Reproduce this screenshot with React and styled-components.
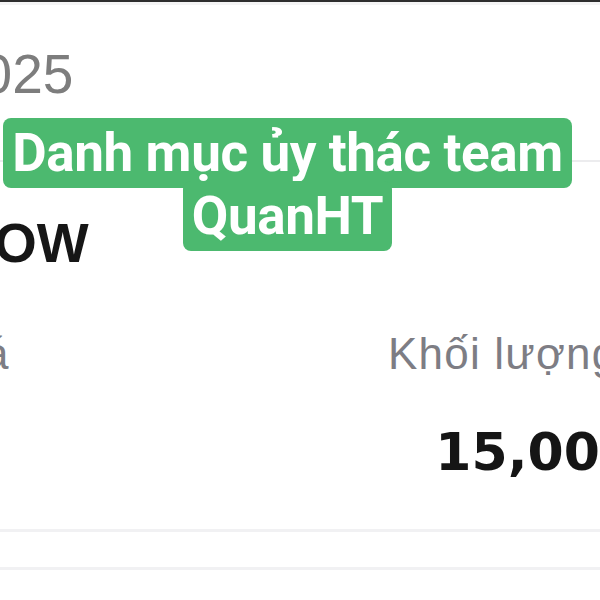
import styled, { createGlobalStyle } from "styled-components";

const Global = createGlobalStyle`
  html, body {
    margin: 0;
    padding: 0;
    background: #ffffff;
  }
  body {
    width: 600px;
    height: 600px;
    overflow: hidden;
  }
`;

const Screen = styled.div`
  position: relative;
  width: 600px;
  height: 600px;
  overflow: hidden;
  background: #ffffff;
  border-top: 2px solid #2e2e2e;
  box-sizing: border-box;
  font-family: "Liberation Sans", Arial, sans-serif;
`;

const Sheet = styled.div`
  width: 697px;
  margin-left: -57px;
  border-top: 3px solid #f4f4f5;
  display: flex;
  flex-direction: column;
`;

const Block = styled.div`
  padding-left: ${(p) => p.shift || 0}px;
`;

const DateText = styled.div`
  margin-top: 39px;
  font-size: 55px;
  line-height: 60px;
  color: #7d7d7d;
`;

const Divider = styled.div`
  height: 2px;
  background: #ececee;
  margin-top: ${(p) => p.top || 0}px;
`;

const Ticker = styled.div`
  margin-top: 49px;
  font-size: 55px;
  line-height: 64px;
  font-weight: 700;
  color: #161616;
`;

const Row = styled.div`
  display: grid;
  grid-template-columns: 1fr 252px;
  align-items: baseline;
  margin-top: ${(p) => p.top || 0}px;
`;

const Label = styled.span`
  font-size: 44px;
  line-height: 50px;
  letter-spacing: ${(p) => (p.wide ? "1.2px" : "0")};
  margin-left: ${(p) => (p.wide ? "0" : "-3px")};
  color: #7d7d84;
  white-space: nowrap;
`;

const Value = styled.span`
  font-family: "DejaVu Sans", sans-serif;
  font-size: 52px;
  line-height: 60px;
  font-weight: 700;
  color: #151515;
  text-align: right;
  margin-right: 4px;
  white-space: nowrap;
`;

const Band = styled.div`
  height: 3px;
  background: #f1f1f3;
  margin-top: ${(p) => p.top || 0}px;
`;

const Caption = styled.div`
  position: absolute;
  left: 0;
  top: 120px;
  width: 575px;
  text-align: center;
  font-family: Roboto, "Noto Sans", sans-serif;
  font-weight: 700;
  font-size: 53px;
  line-height: 63px;
  letter-spacing: -0.4px;
`;

const Tag = styled.span`
  background: #4cb96f;
  color: #ffffff;
  padding: 4px 9px;
  border-radius: 8px;
  -webkit-box-decoration-break: clone;
  box-decoration-break: clone;
`;

export default function App() {
  return (
    <>
      <Global />
      <Screen>
        <Sheet>
          <Block shift={8}>
            <DateText>2025</DateText>
          </Block>
          <Divider top={56} />
          <Block shift={51}>
            <Ticker>OW</Ticker>
          </Block>
          <Row top={54}>
            <Label>Giá</Label>
            <Label wide>Khối lượng</Label>
          </Row>
          <Row top={43}>
            <span />
            <Value>15,000</Value>
          </Row>
          <Band top={47} />
          <Band top={35} />
        </Sheet>
        <Caption>
          <Tag>Danh mục ủy thác team QuanHT</Tag>
        </Caption>
      </Screen>
    </>
  );
}
